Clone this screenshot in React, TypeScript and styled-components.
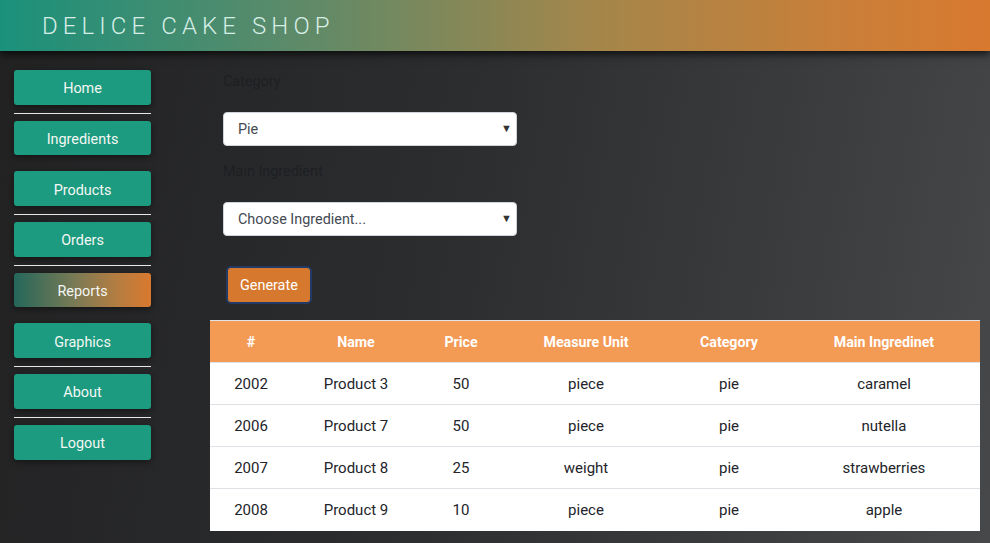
import React from "react";
import styled, { createGlobalStyle } from "styled-components";

const Global = createGlobalStyle`
  html, body { margin: 0; padding: 0; }
  body {
    font-family: Roboto, "Liberation Sans", Arial, sans-serif;
    background: linear-gradient(100deg, #222223 0%, #2c2d2f 45%, #3a3b3d 75%, #474849 100%);
    min-height: 543px;
    overflow: hidden;
  }
  * { box-sizing: border-box; }
`;

const Page = styled.div`
  width: 990px;
  height: 543px;
  display: flex;
  flex-direction: column;
`;

const Header = styled.header`
  height: 51px;
  flex: none;
  display: flex;
  align-items: center;
  padding-left: 42px;
  background: linear-gradient(90deg, #1a917b 0%, #5d8a69 30%, #a4864a 60%, #c97f39 85%, #d8792f 100%);
  box-shadow: 0 3px 8px rgba(0, 0, 0, 0.75);
  position: relative;
  z-index: 1;
`;

const Title = styled.h1`
  margin: 0;
  font-weight: 300;
  font-size: 24px;
  letter-spacing: 5.1px;
  color: #d6eee6;
`;

const Body = styled.div`
  flex: 1;
  display: flex;
`;

const Sidebar = styled.nav`
  width: 165px;
  flex: none;
  padding: 19px 0 0 14px;
  display: flex;
  flex-direction: column;
`;

const NavButton = styled.button<{ $active?: boolean; $gap?: boolean }>`
  width: 137px;
  height: 34.7px;
  flex: none;
  border: none;
  border-radius: 3px;
  padding: 3px 0 0;
  margin-top: ${(p) => (p.$gap ? "16px" : "0")};
  font-family: Roboto, "Liberation Sans", Arial, sans-serif;
  font-size: 14.4px;
  color: #f4f7f3;
  cursor: pointer;
  background: ${(p) =>
    p.$active
      ? "linear-gradient(90deg, #24675a 0%, #7b7a55 45%, #b47d41 75%, #d9792f 100%)"
      : "#1c9b80"};
  box-shadow: 0 2px 6px rgba(0, 0, 0, 0.45);
`;

const Divider = styled.div`
  width: 137px;
  height: 1px;
  flex: none;
  background: #e6e6e6;
  margin: 8px 0 7px;
`;

const Main = styled.main`
  flex: 1;
  padding: 20px 10px 0 45px;
  display: flex;
  flex-direction: column;
`;

const Form = styled.div`
  padding-left: 13px;
  display: flex;
  flex-direction: column;
`;

const Label = styled.label<{ $top?: number }>`
  display: block;
  font-size: 14.4px;
  line-height: 22px;
  color: #1d2023;
  margin-top: ${(p) => p.$top ?? 0}px;
  margin-bottom: 19px;
`;

const SelectWrap = styled.div`
  position: relative;
  width: 294px;
  height: 34px;
`;

const Select = styled.select`
  appearance: none;
  -webkit-appearance: none;
  width: 100%;
  height: 100%;
  border: 1px solid #ced4da;
  border-radius: 4px;
  background: #fff;
  padding: 0 24px 0 14px;
  font-family: Roboto, "Liberation Sans", Arial, sans-serif;
  font-size: 14.4px;
  color: #444a52;
`;

const Arrow = styled.span`
  position: absolute;
  right: 5px;
  top: 50%;
  transform: translateY(-55%);
  font-size: 11px;
  color: #333;
  pointer-events: none;
`;

const GenerateButton = styled.button`
  margin: 32px 0 0 5px;
  align-self: flex-start;
  height: 34px;
  padding: 0 12px;
  border: none;
  border-radius: 3px;
  background: #d6792f;
  color: #fff;
  font-family: Roboto, "Liberation Sans", Arial, sans-serif;
  font-size: 14.4px;
  box-shadow: 0 0 0 2px #223a66;
`;

const Table = styled.table`
  margin-top: 18px;
  width: 770px;
  border-collapse: collapse;
  background: #fff;
  border-top: 1px solid #dfe3e8;
  table-layout: fixed;
`;

const Th = styled.th`
  background: #f39a55;
  color: #fff;
  font-weight: 700;
  font-size: 14.2px;
  height: 42px;
  text-align: center;
  padding: 0;
`;

const Td = styled.td`
  font-size: 15px;
  color: #23242a;
  text-align: center;
  height: 42px;
  padding: 0;
  border-top: 1px solid #dee2e6;
`;

const cols = [82, 128, 82, 168, 118, 192];
const headers = ["#", "Name", "Price", "Measure Unit", "Category", "Main Ingredinet"];
const rows = [
  ["2002", "Product 3", "50", "piece", "pie", "caramel"],
  ["2006", "Product 7", "50", "piece", "pie", "nutella"],
  ["2007", "Product 8", "25", "weight", "pie", "strawberries"],
  ["2008", "Product 9", "10", "piece", "pie", "apple"],
];

const nav: { label: string; divider?: boolean; gap?: boolean; active?: boolean }[] = [
  { label: "Home", divider: true },
  { label: "Ingredients" },
  { label: "Products", gap: true, divider: true },
  { label: "Orders", divider: true },
  { label: "Reports", active: true },
  { label: "Graphics", gap: true, divider: true },
  { label: "About", divider: true },
  { label: "Logout" },
];

export default function App() {
  return (
    <Page>
      <Global />
      <Header>
        <Title>DELICE CAKE SHOP</Title>
      </Header>
      <Body>
        <Sidebar>
          {nav.map((n) => (
            <React.Fragment key={n.label}>
              <NavButton $active={n.active} $gap={n.gap}>
                {n.label}
              </NavButton>
              {n.divider && <Divider />}
            </React.Fragment>
          ))}
        </Sidebar>
        <Main>
          <Form>
            <Label>Category</Label>
            <SelectWrap>
              <Select defaultValue="pie">
                <option value="pie">Pie</option>
                <option value="cake">Cake</option>
              </Select>
              <Arrow>▼</Arrow>
            </SelectWrap>
            <Label $top={15}>Main Ingredient</Label>
            <SelectWrap>
              <Select defaultValue="">
                <option value="">Choose Ingredient...</option>
              </Select>
              <Arrow>▼</Arrow>
            </SelectWrap>
            <GenerateButton>Generate</GenerateButton>
          </Form>
          <Table>
            <colgroup>
              {cols.map((w, i) => (
                <col key={i} style={{ width: w }} />
              ))}
            </colgroup>
            <thead>
              <tr>
                {headers.map((h) => (
                  <Th key={h}>{h}</Th>
                ))}
              </tr>
            </thead>
            <tbody>
              {rows.map((r) => (
                <tr key={r[0]}>
                  {r.map((c, i) => (
                    <Td key={i}>{c}</Td>
                  ))}
                </tr>
              ))}
            </tbody>
          </Table>
        </Main>
      </Body>
    </Page>
  );
}
